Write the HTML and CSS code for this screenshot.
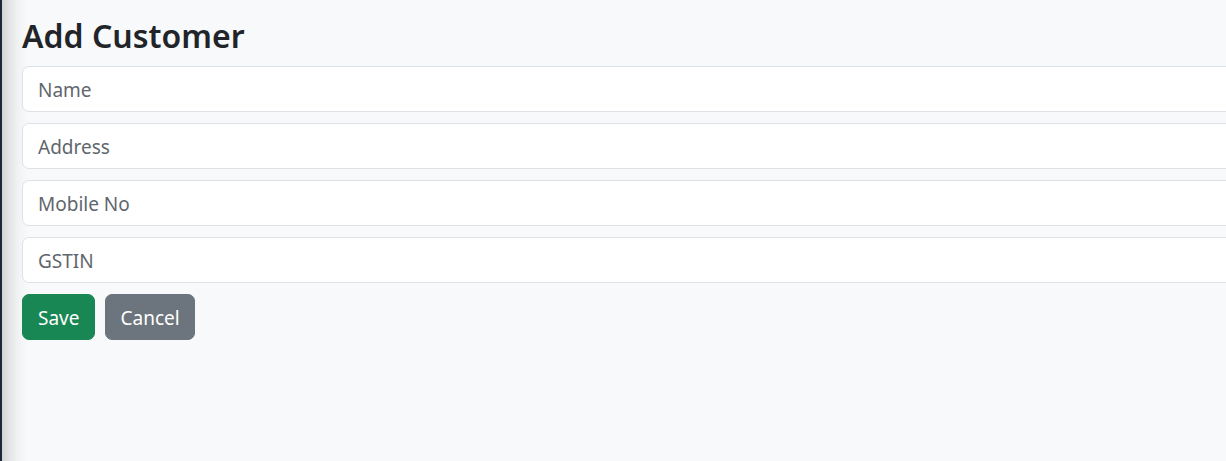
FILE: index.html
```html
<!DOCTYPE html>
<html lang="en">
<head>
  <meta charset="UTF-8" />
  <meta name="viewport" content="width=device-width, initial-scale=1" />
  <title>Add Customer</title>
  <link rel="stylesheet" href="styles.css">
</head>
<body>

<div class="layout">
  <aside class="sidebar"></aside>

  <main class="content">
    <h2 class="page-title">Add Customer</h2>

    <form class="customer-form">
      <input class="form-control" type="text" placeholder="Name" />
      <input class="form-control" type="text" placeholder="Address" />
      <input class="form-control" type="text" placeholder="Mobile No" />
      <input class="form-control" type="text" placeholder="GSTIN" />

      <div class="actions">
        <button type="submit" class="btn btn-success">Save</button>
        <button type="button" class="btn btn-secondary">Cancel</button>
      </div>
    </form>
  </main>
</div>

</body>
</html>
```

FILE: styles.css
```css
html, body {
  margin: 0; padding: 0; height: 100%;
  background: #f8f9fa; color: #212529;
  font-family: "Noto Sans", "Open Sans", sans-serif;
  overflow: hidden;
}
.layout {
  display: flex;
  height: 100vh;
  width: calc(100% + 60px);
}
.sidebar {
  flex: 0 0 2px;
  background: #1e2738;
}
.content {
  flex: 1;
  padding: 17px 0 0 20px;
  background-color: #f8f9fa;
  /* shadow cast by the sidebar */
  background-image: linear-gradient(to right, #d2d3d4, #e4e5e6 8px, #f1f2f3 16px, #f8f9fa 26px);
  background-size: 26px 100%;
  background-repeat: no-repeat;
}
.page-title {
  margin: 0 0 11px;
  font-size: 32px;
  font-weight: 600;
  line-height: 1.2;
}
.customer-form {
  display: flex;
  flex-direction: column;
  gap: 11px;
}
.form-control {
  display: block;
  width: 100%;
  height: 46px;
  box-sizing: border-box;
  padding: 9px 15px 7px;
  font-family: inherit;
  font-size: 19px;
  color: #212529;
  background: #fff;
  border: 1px solid #dee2e6;
  border-radius: 7px;
}
.form-control::placeholder {
  color: #5f666d;
}
.actions {
  display: flex;
  gap: 10px;
}
.btn {
  height: 46px;
  padding: 9px 15px 7px;
  font-family: inherit;
  font-size: 19px;
  border: 1px solid transparent;
  border-radius: 7px;
  color: #fff;
  cursor: pointer;
}
.btn-success { background: #198754; border-color: #198754; }
.btn-secondary { background: #6c757d; border-color: #6c757d; padding: 9px 14px 7px; }
```
